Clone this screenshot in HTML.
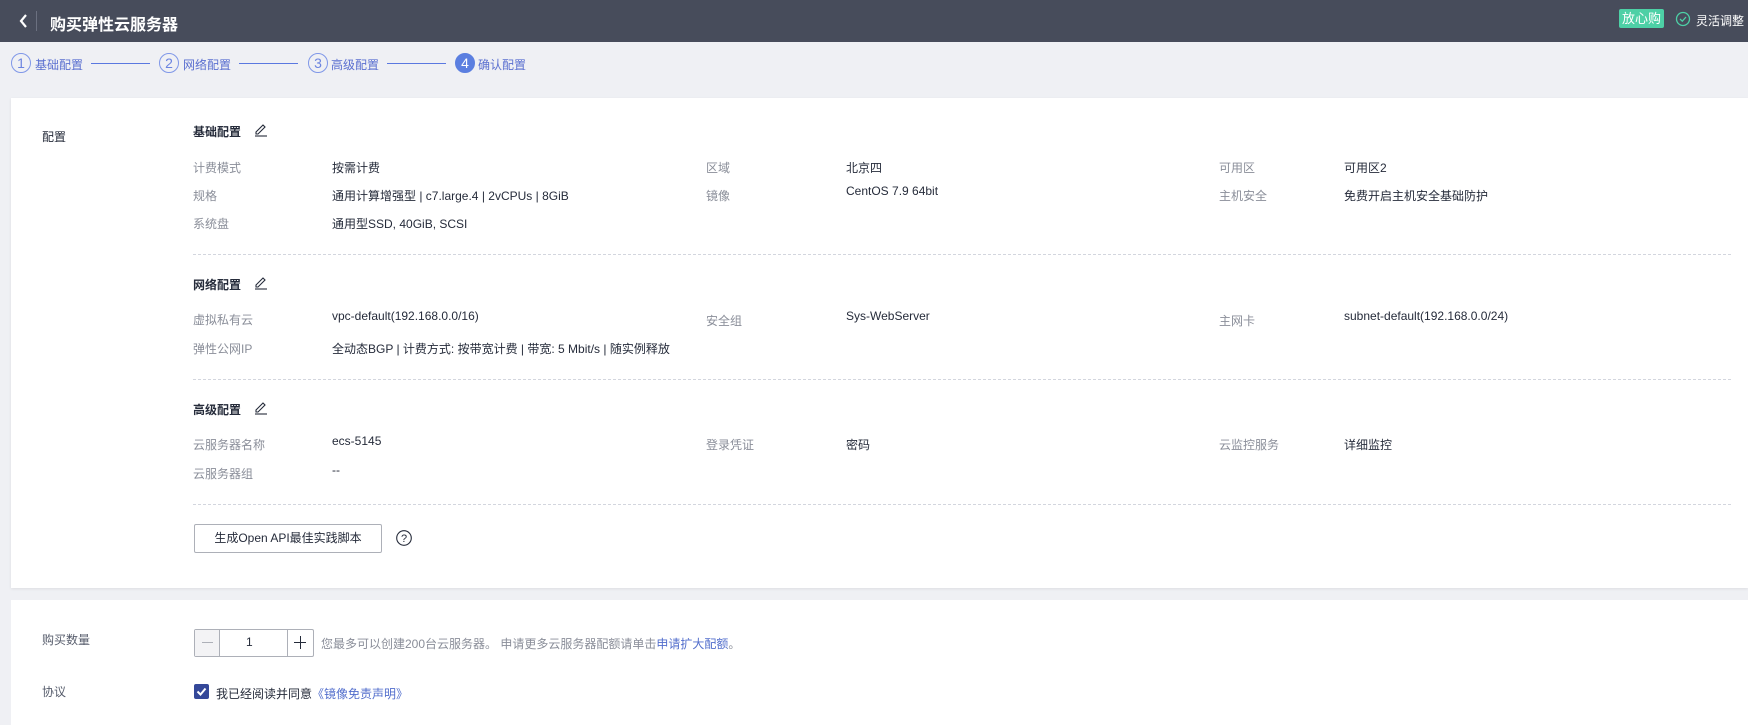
<!DOCTYPE html>
<html><head><meta charset="utf-8"><style>
*{margin:0;padding:0;box-sizing:border-box}
body{width:1748px;height:725px;overflow:hidden;background:#eff0f4;font-family:"Liberation Sans","Noto Sans CJK SC",sans-serif;font-size:12px;color:#252b3a;position:relative}
.a{position:absolute;white-space:nowrap}
.hd{position:absolute;left:0;top:0;width:1748px;height:42px;background:#474c5b}
.lb{color:#8a8e99}
.st{font-weight:bold;color:#252b3a;font-size:12px}
.step{position:absolute;top:53px;width:20px;height:20px;border:1px solid #7f97e8;border-radius:50%;color:#6b84e0;text-align:center;line-height:18px;font-size:14px}
.stt{position:absolute;top:56px;color:#5a6fd0;font-size:12px}
.ln{position:absolute;top:63px;height:1px;background:#5a78e0;width:59px}
.card{position:absolute;background:#fff;left:11px;right:0}
.dash{position:absolute;left:193px;width:1538px;border-top:1px dashed #d3d6de}
</style></head><body>
<div class="hd"></div>
<svg class="a" style="left:18px;top:12px" width="12" height="18"><path d="M8 3 L3 9 L8 15" stroke="#fff" stroke-width="2.2" fill="none"/></svg>
<div class="a" style="left:36px;top:11px;width:1px;height:20px;background:#6b7080"></div>
<div class="a" style="left:50px;top:11px;color:#fff;font-size:16px;font-weight:bold">购买弹性云服务器</div>
<div class="a" style="left:1619px;top:9px;width:45px;height:19px;background:#4dd0a6;border-radius:2px;color:#fff;font-size:13px;text-align:center;line-height:19px">放心购</div>
<svg class="a" style="left:1675px;top:11px" width="16" height="16"><circle cx="8" cy="8" r="6.5" stroke="#4dd0a6" stroke-width="1.3" fill="none"/><path d="M5 8 L7.3 10.2 L11 6" stroke="#4dd0a6" stroke-width="1.3" fill="none"/></svg>
<div class="a" style="left:1696px;top:12px;color:#fff;font-size:12px">灵活调整</div>

<div class="step" style="left:11px">1</div><div class="stt" style="left:35px">基础配置</div><div class="ln" style="left:91px"></div>
<div class="step" style="left:159px">2</div><div class="stt" style="left:183px">网络配置</div><div class="ln" style="left:239px"></div>
<div class="step" style="left:308px">3</div><div class="stt" style="left:331px">高级配置</div><div class="ln" style="left:387px"></div>
<div class="step" style="left:455px;background:#5b7fe0;border-color:#5b7fe0;color:#fff">4</div><div class="stt" style="left:478px">确认配置</div>

<div class="card" style="top:98px;height:490px;box-shadow:0 1px 3px rgba(0,0,0,.08)"></div>
<div class="a" style="left:42px;top:128px">配置</div>

<div class="a st" style="left:193px;top:123px">基础配置</div>
<svg class="a" style="left:253px;top:121px" width="16" height="16"><path d="M3 11 L10 4 L12 6 L5 13 L3 13 Z" stroke="#252b3a" fill="none" stroke-width="1.1"/><path d="M2 15 H14" stroke="#252b3a" stroke-width="1.1"/></svg>
<div class="a lb" style="left:193px;top:159px">计费模式</div><div class="a" style="left:332px;top:159px">按需计费</div>
<div class="a lb" style="left:706px;top:159px">区域</div><div class="a" style="left:846px;top:159px">北京四</div>
<div class="a lb" style="left:1219px;top:159px">可用区</div><div class="a" style="left:1344px;top:159px">可用区2</div>
<div class="a lb" style="left:193px;top:187px">规格</div><div class="a" style="left:332px;top:187px">通用计算增强型 | c7.large.4 | 2vCPUs | 8GiB</div>
<div class="a lb" style="left:706px;top:187px">镜像</div><div class="a" style="left:846px;top:184px">CentOS 7.9 64bit</div>
<div class="a lb" style="left:1219px;top:187px">主机安全</div><div class="a" style="left:1344px;top:187px">免费开启主机安全基础防护</div>
<div class="a lb" style="left:193px;top:215px">系统盘</div><div class="a" style="left:332px;top:215px">通用型SSD, 40GiB, SCSI</div>
<div class="dash" style="top:254px"></div>

<div class="a st" style="left:193px;top:276px">网络配置</div>
<svg class="a" style="left:253px;top:274px" width="16" height="16"><path d="M3 11 L10 4 L12 6 L5 13 L3 13 Z" stroke="#252b3a" fill="none" stroke-width="1.1"/><path d="M2 15 H14" stroke="#252b3a" stroke-width="1.1"/></svg>
<div class="a lb" style="left:193px;top:311px">虚拟私有云</div><div class="a" style="left:332px;top:309px">vpc-default(192.168.0.0/16)</div>
<div class="a lb" style="left:706px;top:312px">安全组</div><div class="a" style="left:846px;top:309px">Sys-WebServer</div>
<div class="a lb" style="left:1219px;top:312px">主网卡</div><div class="a" style="left:1344px;top:309px">subnet-default(192.168.0.0/24)</div>
<div class="a lb" style="left:193px;top:340px">弹性公网IP</div><div class="a" style="left:332px;top:340px">全动态BGP | 计费方式: 按带宽计费 | 带宽: 5 Mbit/s | 随实例释放</div>
<div class="dash" style="top:379px"></div>

<div class="a st" style="left:193px;top:401px">高级配置</div>
<svg class="a" style="left:253px;top:399px" width="16" height="16"><path d="M3 11 L10 4 L12 6 L5 13 L3 13 Z" stroke="#252b3a" fill="none" stroke-width="1.1"/><path d="M2 15 H14" stroke="#252b3a" stroke-width="1.1"/></svg>
<div class="a lb" style="left:193px;top:436px">云服务器名称</div><div class="a" style="left:332px;top:434px">ecs-5145</div>
<div class="a lb" style="left:706px;top:436px">登录凭证</div><div class="a" style="left:846px;top:436px">密码</div>
<div class="a lb" style="left:1219px;top:436px">云监控服务</div><div class="a" style="left:1344px;top:436px">详细监控</div>
<div class="a lb" style="left:193px;top:465px">云服务器组</div><div class="a" style="left:332px;top:463px">--</div>
<div class="dash" style="top:504px"></div>

<div class="a" style="left:194px;top:524px;width:188px;height:29px;border:1px solid #adb0b8;border-radius:2px;text-align:center;line-height:27px">生成Open API最佳实践脚本</div>
<svg class="a" style="left:395px;top:529px" width="18" height="18"><circle cx="9" cy="9" r="7.3" stroke="#252b3a" stroke-width="1.1" fill="none"/><text x="9" y="13" font-size="11" text-anchor="middle" fill="#252b3a" font-family="Liberation Sans">?</text></svg>

<div class="card" style="top:600px;height:125px"></div>
<div class="a lb" style="left:42px;top:631px;color:#575d6c">购买数量</div>
<div class="a" style="left:194px;top:629px;width:120px;height:28px;border:1px solid #adb0b8;border-radius:2px"></div>
<div class="a" style="left:195px;top:630px;width:25px;height:26px;background:#f3f3f5;border-right:1px solid #adb0b8"></div>
<div class="a" style="left:202px;top:642px;width:11px;height:1px;background:#adb0b8"></div>
<div class="a" style="left:287px;top:630px;width:1px;height:26px;background:#adb0b8"></div>
<div class="a" style="left:246px;top:635px;color:#252b3a">1</div>
<div class="a" style="left:294px;top:642px;width:12px;height:1px;background:#252b3a"></div>
<div class="a" style="left:300px;top:636px;width:1px;height:13px;background:#252b3a"></div>
<div class="a lb" style="left:321px;top:635px">您最多可以创建200台云服务器。 申请更多云服务器配额请单击<span style="color:#526ecc">申请扩大配额</span>。</div>
<div class="a lb" style="left:42px;top:683px;color:#575d6c">协议</div>
<div class="a" style="left:194px;top:684px;width:15px;height:15px;background:#344899;border-radius:2px"></div>
<svg class="a" style="left:194px;top:684px" width="15" height="15"><path d="M3.5 7.5 L6.5 10.5 L11.5 4.5" stroke="#fff" stroke-width="2" fill="none"/></svg>
<div class="a" style="left:216px;top:685px">我已经阅读并同意<span style="color:#526ecc">《镜像免责声明》</span></div>
</body></html>
